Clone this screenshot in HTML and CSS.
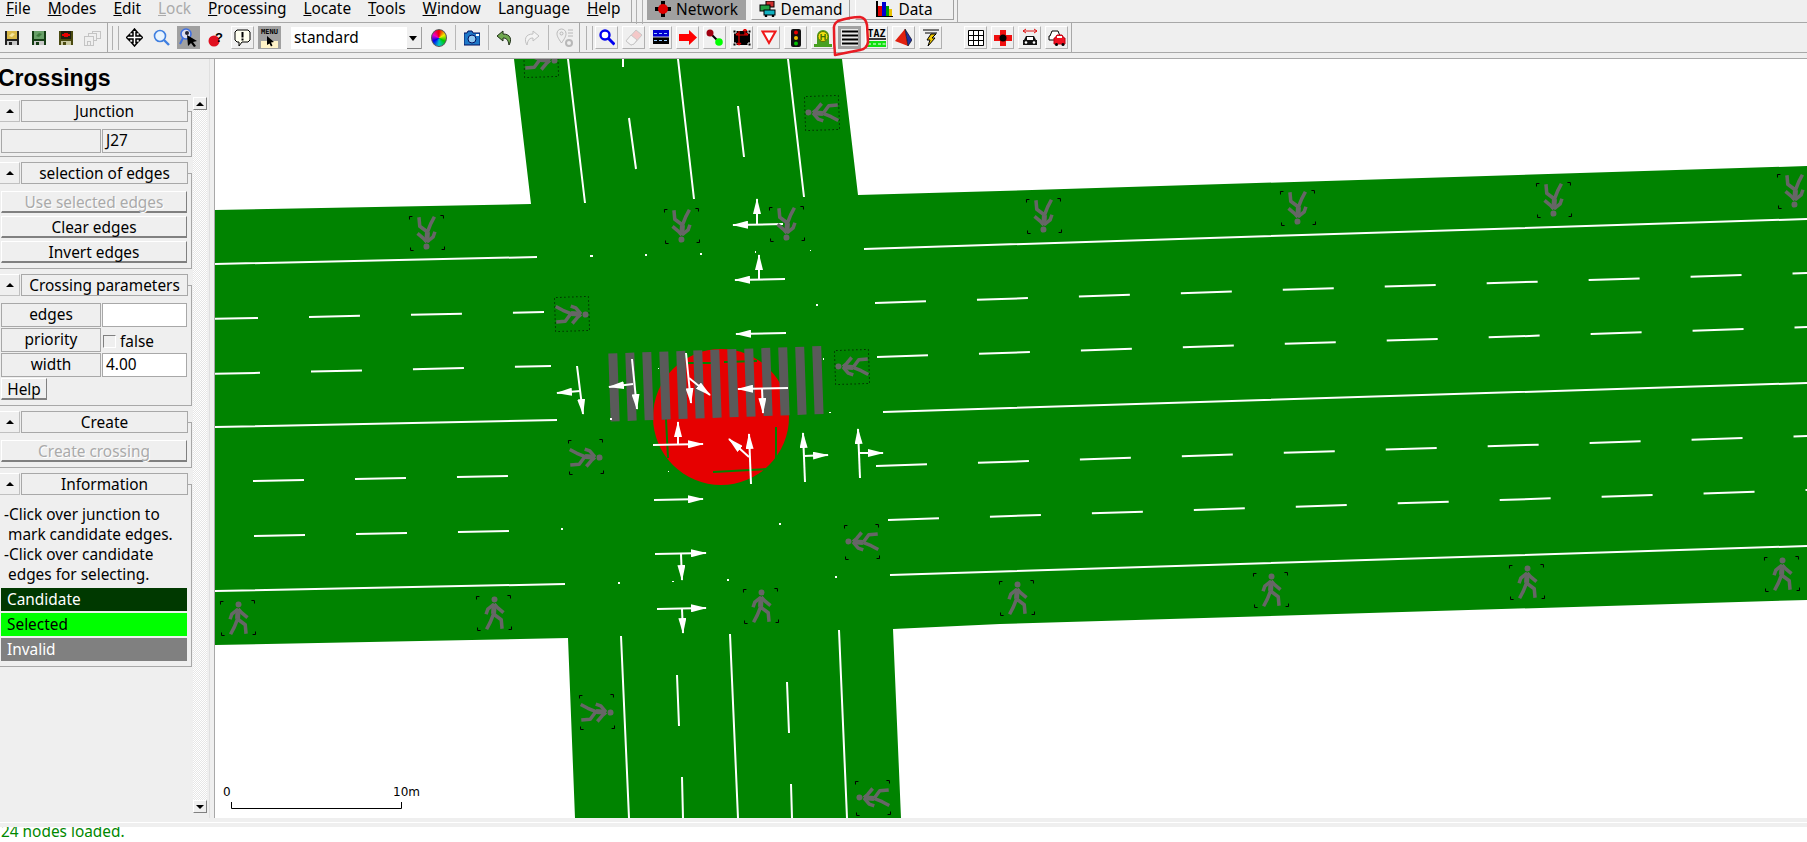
FILE: index.html
```html
<!DOCTYPE html>
<html>
<head>
  <meta charset="utf-8">
  <meta name="viewport" content="width=device-width">
  <title>netedit - Crossings</title>
  <link rel="stylesheet" href="styles.css">
</head>
<body>
  <div class="menu">
    <div class="menu-items">
      <span class="menu-item"><u>F</u>ile</span>
      <span class="menu-item"><u>M</u>odes</span>
      <span class="menu-item"><u>E</u>dit</span>
      <span class="menu-item disabled"><u>L</u>ock</span>
      <span class="menu-item"><u>P</u>rocessing</span>
      <span class="menu-item"><u>L</u>ocate</span>
      <span class="menu-item"><u>T</u>ools</span>
      <span class="menu-item"><u>W</u>indow</span>
      <span class="menu-item">Lan<u>g</u>uage</span>
      <span class="menu-item"><u>H</u>elp</span>
    </div>
    <span class="tb-edge"></span>
    <span class="tb-grip tabs-grip"></span>
    <div class="tabs">
      <div class="tab pressed">
        <svg width="16" height="16" viewBox="0 0 16 16"><path d="M6 0h4v16H6zM0 6h16v4H0z" fill="#000"/><circle cx="8" cy="8" r="5" fill="#e00000"/></svg>
        Network
      </div>
      <div class="tab">
        <svg width="17" height="16" viewBox="0 0 17 16"><rect x="7" y="0" width="8" height="6" fill="#d03030" stroke="#000"/><rect x="1" y="4" width="10" height="6" fill="#20a040" stroke="#000"/><rect x="5" y="9" width="11" height="5" fill="#10b0c0" stroke="#000"/><circle cx="7" cy="15" r="1.3"/><circle cx="14" cy="15" r="1.3"/></svg>
        Demand
      </div>
      <div class="tab">
        <svg width="17" height="16" viewBox="0 0 17 16"><path d="M1 16V0" stroke="#000" stroke-width="2"/><rect x="2" y="5" width="4" height="10" fill="#e00000"/><rect x="6" y="1" width="4" height="14" fill="#0000d0"/><rect x="10" y="5" width="3" height="10" fill="#00a000"/><rect x="13" y="8" width="3" height="7" fill="#e8c000"/><path d="M0 15.500h17" stroke="#000"/></svg>
        Data
      </div>
    </div>
    <span class="tabs-end"></span>
  </div>

  <div class="toolbar">
    <div class="tb-group">
      <span class="tb-btn"><svg width="16" height="16" viewBox="0 0 16 16"><rect x="1" y="1" width="14" height="14" fill="#222"/><rect x="3" y="1" width="10" height="8" fill="#d8b848"/><path d="M5 6l3-3 3 1-3 3z" fill="#f4e49a"/><rect x="3" y="11" width="10" height="4" fill="#c8c8c8"/><rect x="5" y="12" width="3" height="3" fill="#222"/></svg></span>
      <span class="tb-btn"><svg width="16" height="16" viewBox="0 0 16 16"><rect x="1" y="1" width="14" height="14" fill="#143c14"/><rect x="3" y="1" width="10" height="8" fill="#68a068"/><path d="M5 6l3-3 3 1-3 3z" fill="#3c7c3c"/><rect x="3" y="11" width="10" height="4" fill="#c8c8c8"/><rect x="5" y="12" width="3" height="3" fill="#143c14"/></svg></span>
      <span class="tb-btn"><svg width="16" height="16" viewBox="0 0 16 16"><rect x="1" y="1" width="14" height="14" fill="#4a4a10"/><rect x="3" y="1" width="10" height="8" fill="#202010"/><path d="M6 3h4v1h2v2h-2v1H6V6H4V4h2z" fill="#e80000"/><rect x="3" y="11" width="10" height="4" fill="#c8c8a0"/><rect x="5" y="12" width="3" height="3" fill="#4a4a10"/></svg></span>
      <span class="tb-btn"><svg width="18" height="16" viewBox="0 0 18 16" fill="#efefef" stroke="#c4c4c4"><rect x="8.500" y="1.500" width="8" height="7"/><rect x="4.500" y="3.500" width="8" height="7"/><rect x="0.500" y="6.500" width="9" height="9"/><rect x="3.500" y="11.500" width="3" height="4"/></svg></span>
    </div>
    <span class="tb-edge"></span>
    <span class="tb-grip"></span>
    <div class="tb-group">
      <span class="tb-btn"><svg width="17" height="19" viewBox="0 0 17 19"><path d="M8.500 1l3 3.500H10v3.500h3.500V6.500l3 3-3 3V11H10v3.500h1.500l-3 3.500-3-3.500H7V11H3.500v1.500l-3-3 3-3V8H7V4.500H5.500z" fill="#fff" stroke="#000" stroke-width="1.500"/></svg></span>
      <span class="tb-btn"><svg width="17" height="17" viewBox="0 0 17 17"><circle cx="7" cy="7" r="5.500" fill="#e8f4ff" stroke="#3f7fe0" stroke-width="1.600"/><path d="M11 11l5 5" stroke="#3f7fe0" stroke-width="2.400"/></svg></span>
      <span class="tb-btn pressed"><svg width="19" height="20" viewBox="0 0 19 20"><circle cx="7" cy="6" r="5" fill="#dde" stroke="#3f6fe0" stroke-width="1.600"/><path d="M4 10l-3 6" stroke="#3f6fe0" stroke-width="2"/><circle cx="8" cy="5" r="2" fill="#223"/><path d="M8 7l10 6-4 1 3 4-2 1-3-4-3 3z"/></svg></span>
      <span class="tb-btn"><svg width="16" height="18" viewBox="0 0 16 18"><circle cx="6" cy="12" r="5.500" fill="#e01020"/><text x="7" y="13" class="ico-text">?</text></svg></span>
      <span class="tb-btn raised"><svg width="17" height="18" viewBox="0 0 17 18"><path d="M3 1h11l2 2v8l-2 2H8l-3 4v-4H3l-2-2V3z" fill="#fffff0" stroke="#000"/><path d="M8.500 3v5.500M8.500 9.500v2" stroke="#000" stroke-width="2"/></svg></span>
      <span class="tb-btn pressed"><svg width="21" height="22" viewBox="0 0 21 22"><rect x="2" y="14" width="17" height="7" fill="#fff3c8"/><text x="10.500" y="7" class="ico-menu">MENU</text><path d="M8 9l7 6-3 .5 1.500 3-1.500 1-1.500-3L8 18z"/></svg></span>
    </div>
    <div class="combo">
      <span class="combo-text">standard</span>
      <span class="combo-arrow"></span>
    </div>
    <span class="tb-btn"><span class="wheel"></span></span>
    <span class="tb-sep"></span>
    <span class="tb-btn"><svg width="16" height="16" viewBox="0 0 16 16"><path d="M0 3h3l1-2h4l1 2h7v12H0z" fill="#1e78c8" stroke="#001060" stroke-width="1"/><circle cx="8" cy="9" r="4" fill="#90c8f0" stroke="#001060"/><rect x="12" y="4" width="3" height="2" fill="#fff"/></svg></span>
    <span class="tb-sep"></span>
    <span class="tb-btn"><svg width="16" height="16" viewBox="0 0 16 16"><path d="M6 1L0 6l6 5V8c3 0 5 1 6 7 3-5 2-11-6-11z" fill="#70a850" stroke="#203018"/></svg></span>
    <span class="tb-btn gap4"><svg width="17" height="16" viewBox="0 0 17 16"><path d="M10 1l6 5-6 5V8C7 8 5 9 4 15 1 10 2 4 10 4z" fill="#f4f4f4" stroke="#c0c0c0"/></svg></span>
    <span class="tb-sep"></span>
    <span class="tb-btn"><svg width="18" height="20" viewBox="0 0 18 20" fill="none" stroke="#b8b8b8"><path d="M5.500 15C2 10 1 8 1 5.500a4.500 4.500 0 0 1 9 0C10 8 9 10 5.500 15z"/><circle cx="5.500" cy="5.500" r="1.500"/><path d="M12 2h5M12 5h5M12 8h5"/><circle cx="13" cy="15" r="3" stroke-width="2"/></svg></span>
    <span class="tb-edge edge-late"></span>
    <span class="tb-grip grip-late"></span>
    <div class="tb-group">
      <span class="tb-btn raised"><svg width="16" height="17" viewBox="0 0 16 17"><circle cx="6" cy="6" r="4.500" fill="#fff" stroke="#0000f0" stroke-width="2.400"/><path d="M9.500 9.500l6 6" stroke="#0000f0" stroke-width="3"/></svg></span>
      <span class="tb-btn raised"><svg width="18" height="17" viewBox="0 0 18 17"><path d="M11 1l6 5-8 9-3 1-5-4z" fill="#f4c8c8" stroke="#c8c8c8"/><path d="M6 6l6 5-3 4-3 1-5-4z" fill="#f4f4f4" stroke="#c8c8c8"/></svg></span>
      <span class="tb-btn raised"><svg width="16" height="15" viewBox="0 0 16 15"><rect width="16" height="7" fill="#0000d0"/><rect y="7" width="16" height="7" fill="#000"/><path d="M1 3.500h3M6 3.500h3M11 3.500h3M1 10.500h3M6 10.500h3M11 10.500h3" stroke="#9cf" stroke-width="1"/><path d="M0 7h16" stroke="#fff" stroke-width=".8"/></svg></span>
      <span class="tb-btn raised"><svg width="18" height="15" viewBox="0 0 18 15"><path d="M0 4h10V0l8 7.500-8 7.500v-4H0z" fill="#ff0000"/></svg></span>
      <span class="tb-btn raised"><svg width="17" height="17" viewBox="0 0 17 17"><path d="M4 4l9 9" stroke="#000" stroke-width="2"/><circle cx="4" cy="4" r="3.500" fill="#a00010"/><circle cx="13" cy="13" r="3.800" fill="#00ff00"/></svg></span>
      <span class="tb-btn raised"><svg width="18" height="18" viewBox="0 0 18 18"><rect x="1" y="2" width="16" height="14" fill="#000"/><path d="M0 1h3v3H0zM15 1h3v3h-3zM0 14h3v3H0zM15 14h3v3h-3z" fill="#000" stroke="#efefef"/><path d="M6 2v14M3 6h12M3 6l2-2M15 6l-2-2M6 16l-2-2M6 16l2-2M12 0l-2 2M12 0l2 2M12 0v6" stroke="#e80000" fill="none" stroke-width="1.200"/></svg></span>
      <span class="tb-btn raised"><svg width="16" height="15" viewBox="0 0 16 15"><path d="M1.500 1.500h13L8 13z" fill="#fff" stroke="#f01818" stroke-width="2"/></svg></span>
      <span class="tb-btn raised"><svg width="10" height="18" viewBox="0 0 10 18"><rect width="10" height="18" rx="2" fill="#111"/><circle cx="5" cy="3.500" r="2" fill="#e80000"/><circle cx="5" cy="9" r="2" fill="#e8c000"/><circle cx="5" cy="14.500" r="2" fill="#00c000"/></svg></span>
      <span class="tb-btn raised"><svg width="18" height="18" viewBox="0 0 18 18"><path d="M0 18v-3h3V7a6 6 0 0 1 12 0v8h3v3z" fill="#48a020"/><circle cx="9" cy="7.500" r="5" fill="#f0e010" stroke="#607000"/><text x="9" y="10.500" class="ico-h">H</text></svg></span>
      <span class="tb-btn pressed lines-btn"><svg width="16" height="15" viewBox="0 0 16 15"><path d="M0 1.500h16M0 5.500h16M0 9.500h16M0 13.500h16" stroke="#000" stroke-width="2"/></svg></span>
      <span class="tb-btn raised"><svg width="19" height="20" viewBox="0 0 19 20"><text x="9.500" y="9" class="ico-taz">TAZ</text><path d="M0 11h19" stroke="#000" stroke-width="1.500"/><rect y="13" width="19" height="6" fill="#10e010"/><path d="M1 16h3M6 16h3M11 16h3M15.500 16h3" stroke="#fff"/></svg></span>
      <span class="tb-btn raised"><svg width="17" height="18" viewBox="0 0 17 18"><path d="M10 0L0 12l13 5z" fill="#e02010"/><path d="M10 0l7 11-4 6z" fill="#2030a0" stroke="#000" stroke-width=".6"/></svg></span>
      <span class="tb-btn raised"><svg width="16" height="18" viewBox="0 0 16 18"><path d="M0 1h16M2 4h12" stroke="#000"/><path d="M8 5h5L9 9h3l-7 8 2-6H4z" fill="#f0c800" stroke="#000"/></svg></span>
      <span class="tb-btn raised after-gap"><svg width="16" height="16" viewBox="0 0 16 16"><path d="M.500.500h15v15H.500zM5.500.500v15M10.500.500v15M.500 5.500h15M.500 10.500h15" fill="#fff" stroke="#000"/></svg></span>
      <span class="tb-btn raised"><svg width="18" height="16" viewBox="0 0 18 16"><path d="M6 0h6v5h6v6h-6v5H6v-5H0V5h6z" fill="#f01010"/><circle cx="9" cy="8" r="3.500" fill="#000"/></svg></span>
      <span class="tb-btn raised"><svg width="16" height="19" viewBox="0 0 16 19"><path d="M1 3h14M1 3l3-2M1 3l3 2M15 3l-3-2M15 3l-3 2" stroke="#e01010" fill="none"/><path d="M4 8h8l2 4h1v5H1v-5h1z" fill="#111"/><rect x="5" y="9" width="6" height="3" fill="#fff"/><circle cx="4" cy="14.500" r="1.300" fill="#fff"/><circle cx="12" cy="14.500" r="1.300" fill="#fff"/></svg></span>
      <span class="tb-btn raised"><svg width="18" height="17" viewBox="0 0 18 17"><path d="M2 7l2-5h6l2 5h1v4H1V7z" fill="#fff" stroke="#000"/><path d="M7 9l2-3h5l2 3h1v6H6V9z" fill="#f01020" stroke="#c00010"/><rect x="9" y="7" width="5" height="2" fill="#fff"/><circle cx="8.500" cy="15.500" r="1.500" fill="#000"/><circle cx="15" cy="15.500" r="1.500" fill="#000"/></svg></span>
    </div>
    <span class="tb-edge"></span>
  </div>
  <div class="toolbar-foot"></div>

  <div class="main">
    <div class="side">
      <h2 class="side-title">Crossings</h2>
      <div class="side-scroll">
        <div class="groups">
          <div class="group">
            <div class="group-head"><span class="collapse"></span><span class="group-title">Junction</span></div>
            <div class="group-body">
              <div class="row"><div class="cell"></div><div class="cell value">J27</div></div>
            </div>
          </div>
          <div class="group">
            <div class="group-head"><span class="collapse"></span><span class="group-title">selection of edges</span></div>
            <div class="group-body">
              <div class="btn disabled">Use selected edges</div>
              <div class="btn">Clear edges</div>
              <div class="btn">Invert edges</div>
            </div>
          </div>
          <div class="group">
            <div class="group-head"><span class="collapse"></span><span class="group-title">Crossing parameters</span></div>
            <div class="group-body">
              <div class="row"><div class="cell">edges</div><div class="cell value input"></div></div>
              <div class="row"><div class="cell">priority</div><div class="check-wrap"><span class="check"></span>false</div></div>
              <div class="row"><div class="cell">width</div><div class="cell value input">4.00</div></div>
              <div class="btn help">Help</div>
            </div>
          </div>
          <div class="group">
            <div class="group-head"><span class="collapse"></span><span class="group-title">Create</span></div>
            <div class="group-body">
              <div class="btn disabled">Create crossing</div>
            </div>
          </div>
          <div class="group">
            <div class="group-head"><span class="collapse"></span><span class="group-title">Information</span></div>
            <div class="group-body info-body">
              <div class="info">-Click over junction to<br>&nbsp;mark candidate edges.<br>-Click over candidate<br>&nbsp;edges for selecting.</div>
              <div class="legend candidate">Candidate</div>
              <div class="legend selected">Selected</div>
              <div class="legend invalid">Invalid</div>
            </div>
          </div>
        </div>
        <div class="scrollbar">
          <span class="scroll-btn up"></span>
          <span class="scroll-track"></span>
          <span class="scroll-btn down"></span>
        </div>
      </div>
    </div>
    <div class="splitter"></div>

    <svg class="canvas" viewBox="215 58 1592 759">
      <defs>
        <marker id="head" viewBox="0 0 16 8" refX="15" refY="4" markerWidth="16" markerHeight="8" markerUnits="userSpaceOnUse" orient="auto">
          <path d="M0 0L16 4L0 8z" fill="#fff"/>
        </marker>
        <g id="walker" class="walker">
          <circle cx="1" cy="-13.500" r="3" fill="#666" stroke="none"/>
          <path d="M0.500-9L-0.500 1" stroke-width="5"/>
          <path d="M0.500-9L-6-4L-8 1M0.500-9L4-5L9.500 0M-0.500 1L-4 9L-8 16M-0.500 1L7 7L7.500 16"/>
        </g>
        <g id="ped"><rect class="ped-box" x="-17" y="-17" width="34" height="34"/><use href="#walker"/></g>
        <g id="ped-dot"><rect class="ped-dots" x="-17" y="-17" width="34" height="34"/><use href="#walker"/></g>
      </defs>

      <path class="road" d="M215 209L531 203L514 58H842L858 194L1000 190L1807 165V599L1000 623L893 628L901 817H575L568 637L215 644z"/>

      <!-- solid lane borders -->
      <path class="lane" d="M215 263L537 256M215 426L557 419M215 590L565 583M864 248L1807 218M883 411L1807 382M890 574L1807 545"/>
      <path class="lane" d="M568 58L585 202M678 58L694 198M788 58L804 196M621 635L629 817M730 633L738 817M839 629L847 817"/>

      <!-- dashed lane markings -->
      <path class="lane dash" d="M875 302L1807 272M877 356L1807 326M876 465L1807 435M888 519L1807 489"/>
      <path class="lane dash" d="M207 318L544 311M209 373L551 365M253 480L510 475M254 535L511 530"/>
      <path class="lane" d="M623 58L623 66M629 117L636 168M738 105L744 156M677 674L679 725M787 681L789 732M682 776L683 817M791 783L792 817"/>

      <circle class="conflict" cx="721" cy="416" r="68"/>
      <path class="lane thin-green" d="M688 362L713 362M724 361L757 360M666 418L668 457M776 426L776 457M713 471L767 468"/>
      <path class="stripes" d="M609.500 386.500L823 379"/>

      <!-- turn arrows -->
      <g class="arrows">
        <path d="M783 223L733 224"/><path d="M757 223L757 198"/>
        <path d="M785 278L735 279"/><path d="M759 278L759 254"/>
        <path d="M786 332L736 333"/>
        <path d="M577 365L583 413"/><path d="M580 390L557 392"/>
        <path d="M632 358L637 408"/><path d="M633 383L609 386"/>
        <path d="M686 352L691 402"/><path d="M689 377L710 394"/>
        <path d="M788 387L738 388"/><path d="M762 387L763 412"/>
        <path d="M653 444L703 443"/><path d="M678 444L678 421"/>
        <path d="M751 483L749 433"/><path d="M749 456L729 438"/>
        <path d="M805 481L803 432"/><path d="M804 455L828 454"/>
        <path d="M860 477L858 428"/><path d="M859 452L883 452"/>
        <path d="M654 499L703 498"/>
        <path d="M655 553L706 552"/><path d="M681 553L682 579"/>
        <path d="M657 608L706 607"/><path d="M682 608L683 632"/>
      </g>

      <!-- junction shape corners -->
      <path fill="#fff" d="M645 253h2v2h-2zM700 252h2v2h-2zM590 254h3v2h-3zM755 250h1v2h-1zM810 249h1v1h-1zM816 303h2v2h-2zM823 357h1v2h-1zM829 411h2v1h-2zM610 417h2v2h-2zM668 470h1v1h-1zM658 367h1v1h-1zM561 527h2v2h-2zM618 581h2v2h-2zM672 580h2v1h-2zM727 578h2v2h-2zM779 522h2v2h-2zM835 575h2v2h-2z"/>

      <!-- pedestrian signs -->
      <use href="#ped" transform="translate(238 617) rotate(-2)"/>
      <use href="#ped" transform="translate(494 612) rotate(-2)"/>
      <use href="#ped" transform="translate(761 605) rotate(-2)"/>
      <use href="#ped" transform="translate(1017 597) rotate(-2)"/>
      <use href="#ped" transform="translate(1271 589) rotate(-2)"/>
      <use href="#ped" transform="translate(1527 581) rotate(-2)"/>
      <use href="#ped" transform="translate(1782 573) rotate(-2)"/>
      <use href="#ped" transform="translate(427 232) rotate(178)"/>
      <use href="#ped" transform="translate(682 225) rotate(178)"/>
      <use href="#ped" transform="translate(787 223) rotate(178)"/>
      <use href="#ped" transform="translate(1044 215) rotate(178)"/>
      <use href="#ped" transform="translate(1298 207) rotate(178)"/>
      <use href="#ped" transform="translate(1554 199) rotate(178)"/>
      <use href="#ped" transform="translate(1795 190) rotate(178)"/>
      <use href="#ped-dot" transform="translate(541 59) rotate(88)"/>
      <use href="#ped-dot" transform="translate(572 313) rotate(88)"/>
      <use href="#ped" transform="translate(586 456) rotate(88)"/>
      <use href="#ped" transform="translate(597 711) rotate(88)"/>
      <use href="#ped-dot" transform="translate(822 112) rotate(-92)"/>
      <use href="#ped-dot" transform="translate(852 366) rotate(-92)"/>
      <use href="#ped" transform="translate(862 541) rotate(-92)"/>
      <use href="#ped" transform="translate(873 797) rotate(-92)"/>

      <!-- scale -->
      <text class="scale-text" x="223" y="795">0</text>
      <text class="scale-text" x="393" y="795">10m</text>
      <path class="scale" d="M231.500 801V807.500H401.500V801"/>
    </svg>
  </div>

  <div class="bottom-band"></div>
  <div class="status">24 nodes loaded.</div>

  <svg class="annotation" width="60" height="60" viewBox="825 10 60 60">
    <path d="M834 30Q833 24 838 21Q850 17 860 17Q866 18 867 25L868 42Q867 49 860 50L835 55Q834 43 834 30z"/>
  </svg>
</body>
</html>
```
FILE: styles.css
```css
html, body {
  margin: 0;
  padding: 0;
}

body {
  position: relative;
  width: 1807px;
  height: 842px;
  overflow: hidden;
  display: flex;
  flex-direction: column;
  background-color: #efefef;
  color: #000;
  font-family: "Noto Sans", sans-serif;
  font-size: 15.4px;
}

/* menu bar */
.menu {
  display: flex;
  height: 22px;
  padding-left: 6px;
  line-height: 17px;
  border-bottom: 1px solid #a8a8a8;
  flex: none;
}

.menu-items {
  display: flex;
  gap: 17px;
  width: 622px;
  flex: none;
  white-space: nowrap;
}

.menu-item.disabled {
  color: #aaa;
}

.menu .tb-edge {
  height: 22px;
}

.tabs-grip {
  height: 20px;
}

.tabs {
  display: flex;
  gap: 5px;
  height: 20px;
}

.tab {
  width: 99px;
  box-sizing: border-box;
  display: flex;
  align-items: center;
  justify-content: center;
  gap: 5px;
  border-right: 1px solid #a0a0a0;
  border-bottom: 1px solid #a0a0a0;
  border-left: 1px solid #fff;
  padding-bottom: 1px;
}

.tab.pressed {
  background-color: #a0a0a0;
  border-color: #a0a0a0;
}

.tabs-end {
  width: 1px;
  height: 22px;
  margin-left: 3px;
  background-color: #a8a8a8;
}

/* tool bar */
.toolbar {
  display: flex;
  align-items: center;
  height: 29px;
  flex: none;
}

.tb-group {
  display: flex;
  gap: 4px;
}

.tb-btn {
  width: 23px;
  height: 23px;
  box-sizing: border-box;
  display: flex;
  align-items: center;
  justify-content: center;
  flex: none;
}

.tb-btn.raised {
  border-top: 1px solid #fff;
  border-left: 1px solid #fff;
  border-right: 1px solid #b0b0b0;
  border-bottom: 1px solid #b0b0b0;
}

.tb-btn.pressed {
  background-color: #a0a0a0;
}

.tb-btn.lines-btn {
  border: 3px solid #a0a0a0;
  background-color: #e8e8e8;
}

.tb-btn.after-gap {
  margin-left: 18px;
}

.tb-btn.gap4 {
  margin-left: 4px;
}

.tb-edge {
  width: 1px;
  height: 29px;
  margin: 0 4px 0 3px;
  background-color: #a8a8a8;
  flex: none;
}

.tb-edge.edge-late {
  margin-right: 6px;
}

.tb-grip {
  width: 5px;
  height: 24px;
  margin-right: 4px;
  border-left: 1px solid #b0b0b0;
  border-right: 1px solid #b0b0b0;
  flex: none;
}

.tb-grip.grip-late {
  margin-right: 2px;
}

.tb-sep {
  width: 1px;
  height: 25px;
  margin: 0 4px 0 5px;
  background-color: #b8b8b8;
  flex: none;
}

.combo {
  width: 131px;
  height: 22px;
  margin: 0 5px 0 10px;
  box-sizing: border-box;
  display: flex;
  background-color: #fff;
  border-right: 1px solid #a0a0a0;
  flex: none;
}

.combo-text {
  flex: 1;
  padding-left: 3px;
  line-height: 21px;
}

.combo-arrow {
  width: 14px;
  position: relative;
  background-color: #efefef;
  border-bottom: 1px solid #808080;
}

.combo-arrow::after {
  content: "";
  position: absolute;
  left: 2px;
  top: 9px;
  border-left: 4px solid transparent;
  border-right: 4px solid transparent;
  border-top: 5px solid #000;
}

.wheel {
  width: 16px;
  height: 18px;
  box-sizing: border-box;
  border: 1px solid #555;
  border-radius: 50%;
  background: conic-gradient(#f00000, #f0f000, #00c800, #00c8c8, #0000f0, #f000c0, #f00000);
}

.ico-text {
  font-family: "Liberation Sans", sans-serif;
  font-size: 13px;
  font-weight: bold;
}

.ico-menu {
  font-family: "DejaVu Sans Mono", monospace;
  font-size: 7px;
  font-weight: bold;
  text-anchor: middle;
}

.ico-h {
  font-family: "Liberation Sans", sans-serif;
  font-size: 9px;
  font-weight: bold;
  text-anchor: middle;
  fill: #407000;
}

.ico-taz {
  font-family: "DejaVu Sans Mono", monospace;
  font-size: 10px;
  font-weight: bold;
  text-anchor: middle;
}

.toolbar-foot {
  height: 5px;
  flex: none;
  border-top: 1px solid #a8a8a8;
  border-bottom: 1px solid #a8a8a8;
}

/* side panel */
.main {
  display: flex;
  height: 759px;
  flex: none;
}

.side {
  width: 209px;
  flex: none;
}

.side-title {
  margin: 0 0 0 -2px;
  height: 35px;
  width: 193px;
  font-family: "Liberation Sans", sans-serif;
  font-size: 23px;
  font-weight: bold;
  line-height: 39px;
  border-bottom: 1px solid #a8a8a8;
}

.side-scroll {
  display: flex;
  height: 723px;
}

.groups {
  width: 192px;
  padding-top: 5px;
  flex: none;
}

.group {
  position: relative;
  margin-bottom: 5px;
  padding-bottom: 6px;
}

.group::after {
  content: "";
  position: absolute;
  left: 0;
  right: 0;
  top: 11px;
  bottom: 0;
  border-top: 1px solid #a8a8a8;
  border-right: 1px solid #a8a8a8;
  border-bottom: 1px solid #a8a8a8;
}

.group-head {
  position: relative;
  z-index: 1;
  display: flex;
  height: 22px;
  width: 188px;
  gap: 1px;
  background-color: #efefef;
}

.collapse {
  width: 20px;
  box-sizing: border-box;
  position: relative;
  border: 1px solid #c0c0c0;
  border-left: 0;
  border-top-color: #fff;
}

.collapse::after {
  content: "";
  position: absolute;
  left: 6px;
  top: 8px;
  border-left: 4px solid transparent;
  border-right: 4px solid transparent;
  border-bottom: 4px solid #000;
}

.group-title {
  flex: 1;
  box-sizing: border-box;
  border: 1px solid #a8a8a8;
  text-align: center;
  line-height: 22px;
}

.group-body {
  position: relative;
  z-index: 1;
  display: flex;
  flex-direction: column;
  gap: 3px;
  padding: 7px 0 0 1px;
}

.row {
  display: grid;
  grid-template-columns: 100px 85px;
  gap: 1px;
  height: 22px;
}

.cell {
  box-sizing: border-box;
  border: 1px solid #a8a8a8;
  text-align: center;
  line-height: 22px;
}

.cell.value {
  text-align: left;
  padding-left: 3px;
}

.cell.input {
  background-color: #fff;
}

.check-wrap {
  display: flex;
  align-items: center;
  gap: 4px;
  padding: 2px 0 0 1px;
}

.check {
  width: 11px;
  height: 11px;
  background-color: #efefef;
  border-top: 1px solid #808080;
  border-left: 1px solid #808080;
  border-right: 1px solid #fff;
  border-bottom: 1px solid #fff;
}

.btn {
  width: 186px;
  height: 22px;
  box-sizing: border-box;
  text-align: center;
  line-height: 22px;
  border-top: 1px solid #fff;
  border-left: 1px solid #fff;
  border-right: 1px solid #808080;
  border-bottom: 2px solid #808080;
}

.btn.disabled {
  color: #aaa;
  text-shadow: 1px 1px 0 #fff;
}

.btn.help {
  width: 46px;
}

.info-body {
  gap: 2px;
  padding-top: 10px;
  padding-bottom: 0;
}

.info {
  line-height: 20px;
  padding-left: 3px;
  margin-bottom: 1px;
  white-space: nowrap;
}

.legend {
  width: 186px;
  height: 23px;
  box-sizing: border-box;
  padding-left: 6px;
  line-height: 24px;
}

.legend.candidate {
  background-color: #003900;
  color: #fff;
}

.legend.selected {
  background-color: #00ff00;
}

.legend.invalid {
  background-color: #808080;
  color: #fff;
}

.scrollbar {
  width: 14px;
  margin: 2px 0 0 1px;
  height: 716px;
  display: flex;
  flex-direction: column;
  flex: none;
}

.scroll-btn {
  height: 13px;
  position: relative;
  box-sizing: border-box;
  flex: none;
  border-top: 1px solid #fff;
  border-left: 1px solid #fff;
  border-right: 1px solid #808080;
  border-bottom: 1px solid #808080;
}

.scroll-btn.up::after,
.scroll-btn.down::after {
  content: "";
  position: absolute;
  left: 2px;
  top: 4px;
  border-left: 4px solid transparent;
  border-right: 4px solid transparent;
}

.scroll-btn.up::after {
  border-bottom: 4px solid #000;
}

.scroll-btn.down::after {
  border-top: 4px solid #000;
}

.scroll-track {
  flex: 1;
  background: repeating-conic-gradient(#fff 0 25%, #e6e6e6 0 50%) 0 0 / 2px 2px;
}

.splitter {
  width: 6px;
  box-sizing: border-box;
  flex: none;
  border-left: 1px solid #e0e0e0;
  border-right: 1px solid #a8a8a8;
}

/* network canvas */
.canvas {
  display: block;
  width: 1592px;
  height: 759px;
  background-color: #fff;
  flex: none;
}

.road {
  fill: #008300;
}

.lane {
  fill: none;
  stroke: #fff;
  stroke-width: 2;
}

.lane.dash {
  stroke-dasharray: 51 51;
}

.lane.thin-green {
  stroke: #008300;
}

.conflict {
  fill: #e60000;
}

.stripes {
  fill: none;
  stroke: #5a5a5a;
  stroke-width: 68;
  stroke-dasharray: 9 8;
}

.arrows path {
  fill: none;
  stroke: #fff;
  stroke-width: 2;
  marker-end: url(#head);
}

.walker {
  fill: none;
  stroke: #666;
  stroke-width: 3.5;
  stroke-linejoin: round;
}

.ped-box {
  fill: none;
  stroke: #000;
  stroke-width: 1;
  stroke-dasharray: 3 28 3 0;
}

.ped-dots {
  fill: none;
  stroke: #000;
  stroke-width: 1;
  stroke-dasharray: 1 3;
}

.scale {
  fill: none;
  stroke: #000;
  stroke-width: 1;
}

.scale-text {
  font-family: "DejaVu Sans", sans-serif;
  font-size: 12px;
}

/* bottom */
.bottom-band {
  height: 9px;
  flex: none;
  box-sizing: border-box;
  border-top: 4px solid #efefef;
  background: linear-gradient(#fff 1px, #efefef 1px);
}

.status {
  flex: 1;
  background-color: #fff;
  color: #008800;
  padding-left: 1px;
  line-height: 10px;
  white-space: nowrap;
  overflow: hidden;
}

.annotation {
  position: absolute;
  left: 825px;
  top: 10px;
  fill: none;
  stroke: #e81c24;
  stroke-width: 2.500;
  stroke-linejoin: round;
}
```
